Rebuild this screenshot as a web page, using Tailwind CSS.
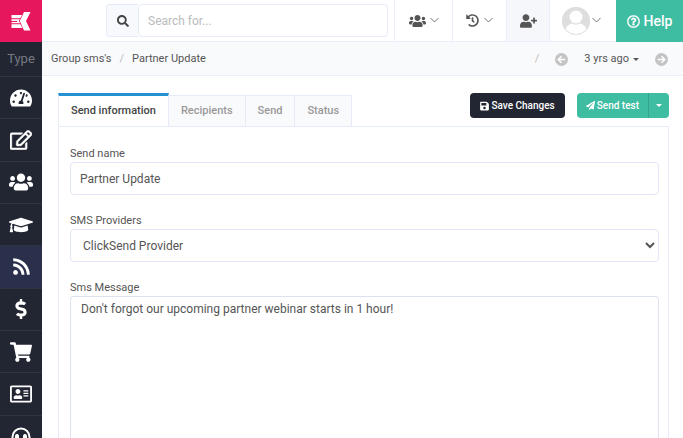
<!DOCTYPE html>
<html lang="en">
  <head>
    <meta charset="UTF-8" />
    <meta name="viewport" content="width=device-width, initial-scale=1.0" />
    <title>Partner Update</title>
    <script src="https://cdn.jsdelivr.net/npm/@tailwindcss/browser@4"></script>
  </head>
  <body class="h-screen overflow-hidden bg-white font-['Roboto',sans-serif] text-xs text-[#555]">
    <div class="flex h-full">
      <!-- Sidebar -->
      <aside class="w-[42px] shrink-0 overflow-hidden bg-[#222633] text-white">
        <a href="#" aria-label="Home" class="flex h-[42px] items-center justify-center bg-[#e6175c]">
          <svg class="h-5 w-5" viewBox="0 0 20 20" fill="currentColor">
            <path d="M.5 4H11L9.300 7.300H.5zM.5 8.200h8.300l-1 1.800 1.400 2.200H.5v-1.300h6L5.800 10H.5zM.5 13.200h9l1.800 3.800H.5zM13 1h6.500l-4.500 9 4.500 9.500H13L8.800 10z" />
          </svg>
        </a>
        <div class="flex h-[34px] items-center justify-center text-[13px] text-[#777a83]">Type</div>
        <nav class="grid h-[381px] auto-rows-fr">
          <a href="#" aria-label="Dashboard" class="flex items-center justify-center border-t border-[#303441]">
            <svg class="h-5 w-[22px]" viewBox="0 0 576 512" fill="currentColor"><path d="M288 32C128.940 32 0 160.940 0 320c0 52.800 14.250 102.260 39.060 144.800 5.610 9.620 16.300 15.200 27.440 15.200h443c11.140 0 21.830-5.580 27.440-15.200C561.750 422.260 576 372.800 576 320c0-159.060-128.940-288-288-288zm0 64c14.710 0 26.580 10.130 30.320 23.650-1.110 2.260-2.640 4.230-3.450 6.670l-9.220 27.670c-5.130 3.490-10.970 6.010-17.640 6.010-17.670 0-32-14.330-32-32S270.330 96 288 96zM96 384c-17.670 0-32-14.330-32-32s14.330-32 32-32 32 14.330 32 32-14.330 32-32 32zm48-160c-17.670 0-32-14.330-32-32s14.330-32 32-32 32 14.330 32 32-14.330 32-32 32zm246.770-72.410l-61.330 184C343.130 347.330 352 364.540 352 384c0 11.720-3.380 22.550-8.880 32H232.880c-5.500-9.450-8.880-20.280-8.880-32 0-33.940 26.500-61.430 59.900-63.590l61.340-184.010c4.170-12.560 17.730-19.450 30.360-15.170 12.570 4.190 19.350 17.790 15.170 30.360zm14.660 57.200l15.520-46.550c3.470-1.290 7.130-2.230 11.050-2.230 17.670 0 32 14.330 32 32s-14.330 32-32 32c-11.380-.01-20.890-6.280-26.570-15.220zM480 384c-17.670 0-32-14.330-32-32s14.330-32 32-32 32 14.330 32 32-14.330 32-32 32z" /></svg>
          </a>
          <a href="#" aria-label="Edit" class="flex items-center justify-center border-t border-[#303441]">
            <svg class="h-5 w-[22px]" viewBox="0 0 576 512" fill="currentColor" stroke="currentColor" stroke-width="10"><path d="M402.300 344.900l32-32c5-5 13.700-1.500 13.700 5.700V464c0 26.500-21.500 48-48 48H48c-26.500 0-48-21.500-48-48V112c0-26.500 21.500-48 48-48h273.500c7.100 0 10.700 8.600 5.700 13.700l-32 32c-1.500 1.500-3.500 2.300-5.700 2.300H48v352h352V350.500c0-2.100.8-4.100 2.300-5.600zm156.600-201.800L296.300 405.700l-90.400 10c-26.200 2.900-48.500-19.200-45.600-45.600l10-90.400L432.900 17.100c22.900-22.900 59.900-22.900 82.700 0l43.200 43.200c22.900 22.900 22.900 60 .1 82.800zM460.100 174L402 115.900 216.200 301.800l-7.300 65.300 65.300-7.300L460.100 174zm64.800-79.700l-43.200-43.200c-4.100-4.100-10.800-4.100-14.800 0L436 82l58.100 58.100 30.900-30.900c4-4.200 4-10.800-.1-14.900z" /></svg>
          </a>
          <a href="#" aria-label="Users" class="flex items-center justify-center border-t border-[#303441]">
            <svg class="h-5 w-6" viewBox="0 0 640 512" fill="currentColor"><path id="users" d="M96 224c35.300 0 64-28.700 64-64s-28.700-64-64-64-64 28.700-64 64 28.700 64 64 64zm448 0c35.300 0 64-28.700 64-64s-28.700-64-64-64-64 28.700-64 64 28.700 64 64 64zm32 32h-64c-17.600 0-33.500 7.100-45.100 18.600 40.300 22.100 68.900 62 75.100 109.400h66c17.700 0 32-14.300 32-32v-32c0-35.300-28.700-64-64-64zm-256 0c61.900 0 112-50.100 112-112S381.900 32 320 32 208 82.100 208 144s50.100 112 112 112zm76.800 32h-8.300c-20.800 10-43.900 16-68.500 16s-47.600-6-68.500-16h-8.300C179.600 288 128 339.600 128 403.200V432c0 26.500 21.500 48 48 48h288c26.500 0 48-21.500 48-48v-28.800c0-63.600-51.600-115.200-115.200-115.200zm-223.700-13.400C161.500 263.100 145.600 256 128 256H64c-35.300 0-64 28.700-64 64v32c0 17.700 14.300 32 32 32h65.900c6.300-47.400 34.900-87.300 75.200-109.400z" /></svg>
          </a>
          <a href="#" aria-label="Courses" class="flex items-center justify-center border-t border-[#303441]">
            <svg class="h-5 w-6" viewBox="0 0 640 512" fill="currentColor"><path d="M622.340 153.200L343.400 67.500c-15.200-4.670-31.600-4.670-46.790 0L17.660 153.200c-23.540 7.230-23.540 38.360 0 45.590l48.630 14.940c-10.670 13.190-17.230 29.280-17.880 46.900C38.780 266.150 32 276.110 32 288c0 10.780 5.680 19.850 13.860 25.650L20.330 428.530C18.110 438.520 25.710 448 35.940 448h56.110c10.240 0 17.840-9.480 15.620-19.470L82.140 313.650C90.320 307.850 96 298.780 96 288c0-11.570-6.470-21.250-15.660-26.870.76-15.020 8.440-28.300 20.690-36.720L296.600 284.500c9.060 2.780 26.440 6.250 46.790 0l278.950-85.700c23.550-7.240 23.550-38.360 0-45.600zM352.790 315.090c-28.530 8.760-52.840 3.920-65.590 0l-145.020-44.550L128 384c0 35.350 85.960 64 192 64s192-28.650 192-64l-14.180-113.470-145.030 44.560z" /></svg>
          </a>
          <a href="#" aria-label="Broadcasts" class="flex items-center justify-center border-t border-[#303441] bg-[#2a2f4b]">
            <svg class="h-[19px] w-[17px]" viewBox="0 0 448 512" fill="currentColor"><path d="M128.081 415.959c0 35.369-28.672 64.041-64.041 64.041S0 451.328 0 415.959s28.672-64.041 64.041-64.041 64.040 28.673 64.040 64.041zm175.660 47.250c-8.354-154.600-132.185-278.587-286.950-286.950C7.656 175.765 0 183.105 0 192.253v48.069c0 8.415 6.490 15.472 14.887 16.018 111.832 7.284 201.473 96.702 208.772 208.772.547 8.397 7.604 14.887 16.018 14.887h48.069c9.149.001 16.489-7.655 15.995-16.790zm144.249.288C439.596 229.677 251.465 40.445 16.503 32.010 7.473 31.686 0 38.981 0 48.016v48.068c0 8.625 6.835 15.645 15.453 15.999 191.179 7.839 344.627 161.316 352.465 352.465.353 8.618 7.373 15.453 15.999 15.453h48.068c9.034-.001 16.329-7.474 16.005-16.504z" /></svg>
          </a>
          <a href="#" aria-label="Billing" class="flex items-center justify-center border-t border-[#303441]">
            <svg class="h-5 w-3" viewBox="0 0 288 512" fill="currentColor"><path d="M209.200 233.400l-108-31.600C88.700 198.200 80 186.500 80 173.500c0-16.300 13.200-29.500 29.500-29.500h66.300c12.200 0 24.200 3.700 34.200 10.500 6.100 4.100 14.300 3.100 19.500-2l34.800-34c7.100-6.900 6.100-18.400-1.800-24.500C238 74.800 207.400 64.100 176 64V16c0-8.800-7.200-16-16-16h-32c-8.800 0-16 7.200-16 16v48h-2.500C45.800 64-5.400 118.700.5 183.600c4.200 46.100 39.400 83.600 83.800 96.600l102.500 30c12.500 3.700 21.200 15.300 21.200 28.300 0 16.300-13.200 29.500-29.500 29.500h-66.300C100 368 88 364.300 78 357.500c-6.100-4.100-14.300-3.100-19.500 2l-34.800 34c-7.100 6.900-6.100 18.400 1.800 24.500 24.500 19.200 55.100 29.900 86.500 30v48c0 8.800 7.200 16 16 16h32c8.800 0 16-7.200 16-16v-48.200c46.600-.9 90.300-28.600 105.700-72.700 21.500-61.600-14.600-124.800-72.500-141.700z" /></svg>
          </a>
          <a href="#" aria-label="Cart" class="flex items-center justify-center border-t border-[#303441]">
            <svg class="h-5 w-[22px]" viewBox="0 0 576 512" fill="currentColor"><path d="M528.120 301.319l47.273-208C578.806 78.301 567.391 64 551.990 64H159.208l-9.166-44.810C147.758 8.021 137.930 0 126.529 0H24C10.745 0 0 10.745 0 24v16c0 13.255 10.745 24 24 24h69.883l70.248 343.435C147.325 417.100 136 435.222 136 456c0 30.928 25.072 56 56 56s56-25.072 56-56c0-15.674-6.447-29.835-16.824-40h209.647C430.447 426.165 424 440.326 424 456c0 30.928 25.072 56 56 56s56-25.072 56-56c0-22.172-12.888-41.332-31.579-50.405l5.517-24.276c3.413-15.018-8.002-29.319-23.403-29.319H218.117l-6.545-32h293.145c11.206 0 20.920-7.754 23.403-18.681z" /></svg>
          </a>
          <a href="#" aria-label="Contacts" class="flex items-center justify-center border-t border-[#303441]">
            <svg class="h-5 w-[22px]" viewBox="0 0 576 512" fill="currentColor"><path d="M528 32H48C21.500 32 0 53.500 0 80v352c0 26.500 21.500 48 48 48h480c26.500 0 48-21.500 48-48V80c0-26.500-21.500-48-48-48zm0 400H48V80h480v352zM208 256c35.300 0 64-28.700 64-64s-28.700-64-64-64-64 28.700-64 64 28.700 64 64 64zm-89.600 128h179.200c12.400 0 22.400-8.600 22.400-19.200v-19.200c0-31.800-30.100-57.600-67.200-57.600-10.800 0-18.700 8-44.800 8-26.900 0-33.400-8-44.800-8-37.100 0-67.200 25.800-67.200 57.600v19.200c0 10.600 10 19.200 22.400 19.200zM352 288h128v32H352zM352 224h128v32H352zM352 160h128v32H352z" /></svg>
          </a>
          <a href="#" aria-label="Support" class="flex items-center justify-center border-t border-[#303441]">
            <svg class="h-[18px] w-5" viewBox="0 0 20 18" fill="none" stroke="currentColor" stroke-width="2">
              <path d="M1.500 13v-3a8.500 8.500 0 0 1 17 0v4a3 3 0 0 1-3 3H10" />
              <path d="M5.500 7H6.500a2 2 0 0 1 1.500 2v3a2 2 0 0 1-2 2 2 2 0 0 1-2-2V9a2 2 0 0 1 1.500-2zM14.500 7H13.500a2 2 0 0 0-1.500 2v3a2 2 0 0 0 2 2 2 2 0 0 0 2-2V9a2 2 0 0 0-1.500-2z" fill="currentColor" stroke="none" />
            </svg>
          </a>
        </nav>
      </aside>

      <div class="flex min-w-0 flex-1 flex-col">
        <!-- Top bar -->
        <header class="flex h-[42px] shrink-0 border-b border-[#ebeffb]">
          <form class="flex flex-1 items-center pr-[6px] pl-16">
            <button type="button" aria-label="Search" class="flex h-[33px] w-8 shrink-0 items-center justify-center rounded-l border border-r-0 border-[#e6ebfa] bg-[#f8f9fc] text-[#444]">
              <svg class="h-3 w-3" viewBox="0 0 512 512" fill="currentColor"><path d="M505 442.700L405.300 343c-4.500-4.500-10.600-7-17-7H372c27.600-35.300 44-79.700 44-128C416 93.100 322.900 0 208 0S0 93.100 0 208s93.100 208 208 208c48.300 0 92.700-16.400 128-44v16.300c0 6.400 2.500 12.500 7 17l99.700 99.700c9.400 9.400 24.600 9.400 33.900 0l28.300-28.300c9.400-9.400 9.400-24.600.1-34zM208 336c-70.700 0-128-57.200-128-128 0-70.700 57.200-128 128-128 70.700 0 128 57.200 128 128 0 70.700-57.200 128-128 128z" /></svg>
            </button>
            <input type="text" aria-label="Search for" placeholder="Search for..." class="h-[33px] w-full min-w-0 rounded border border-[#e6ebfa] px-[9px] text-xs placeholder:text-[#bbb]" />
          </form>
          <button type="button" aria-label="Groups" class="flex w-[58px] items-center justify-center gap-1 border-l border-[#ebeffb]">
            <svg class="h-[14px] w-[17px]" viewBox="0 0 640 512" fill="currentColor"><use href="#users" /></svg>
            <svg class="h-[9px] w-[9px] text-[#777]" viewBox="0 0 9 9" fill="none" stroke="currentColor"><path d="M.5 2l4 4 4-4" /></svg>
          </button>
          <button type="button" aria-label="History" class="flex w-[54px] items-center justify-center gap-[5px] border-l border-[#ebeffb]">
            <svg class="h-[13px] w-[13px]" viewBox="0 0 512 512" fill="currentColor"><path d="M504 255.531c.253 136.640-111.180 248.372-247.820 248.468-59.015.042-113.223-20.530-155.822-54.911-11.077-8.940-11.905-25.541-1.839-35.607l11.267-11.267c8.609-8.609 22.353-9.551 31.891-1.984C173.062 425.135 212.781 440 256 440c101.705 0 184-82.311 184-184 0-101.705-82.311-184-184-184-48.814 0-93.149 18.969-126.068 49.932l50.754 50.754c10.080 10.080 2.941 27.314-11.313 27.314H24c-8.837 0-16-7.163-16-16V38.627c0-14.254 17.234-21.393 27.314-11.314l49.372 49.372C129.209 34.136 189.552 8 256 8c136.810 0 247.747 110.780 248 247.531zm-180.912 78.784l9.823-12.630c8.138-10.463 6.253-25.542-4.210-33.679L288 256.349V152c0-13.255-10.745-24-24-24h-16c-13.255 0-24 10.745-24 24v135.651l65.409 50.874c10.463 8.137 25.541 6.253 33.679-4.210z" /></svg>
            <svg class="h-[9px] w-[9px] text-[#777]" viewBox="0 0 9 9" fill="none" stroke="currentColor"><path d="M.5 2l4 4 4-4" /></svg>
          </button>
          <button type="button" aria-label="Add user" class="flex w-[43px] items-center justify-center border-l border-[#ebeffb] bg-[#f5f7fb]">
            <svg class="h-[14px] w-[17px]" viewBox="0 0 640 512" fill="currentColor"><path d="M624 208h-64v-64c0-8.800-7.200-16-16-16h-32c-8.800 0-16 7.200-16 16v64h-64c-8.800 0-16 7.200-16 16v32c0 8.800 7.200 16 16 16h64v64c0 8.800 7.200 16 16 16h32c8.800 0 16-7.200 16-16v-64h64c8.800 0 16-7.200 16-16v-32c0-8.800-7.200-16-16-16zm-400 48c70.700 0 128-57.300 128-128S294.700 0 224 0 96 57.300 96 128s57.300 128 128 128zm89.600 32h-16.700c-22.200 10.200-46.900 16-72.900 16s-50.600-5.800-72.900-16h-16.700C60.200 288 0 348.200 0 422.400V464c0 26.500 21.500 48 48 48h352c26.500 0 48-21.500 48-48v-41.600c0-74.200-60.200-134.400-134.400-134.400z" /></svg>
          </button>
          <button type="button" aria-label="Account" class="flex w-[67px] items-center justify-center gap-[2px] border-l border-[#ebeffb] pr-1">
            <svg class="h-7 w-7" viewBox="0 0 28 28">
              <clipPath id="avatar"><circle cx="14" cy="14" r="14" /></clipPath>
              <g clip-path="url(#avatar)">
                <path d="M0 0h28v28H0z" fill="#dedede" />
                <circle cx="14" cy="10" r="6.500" fill="#fff" />
                <path d="M2 28c0-8 5-11 8-11.500 2.500 1.500 5.500 1.500 8 0 3 .5 8 3.500 8 11.500z" fill="#fff" />
              </g>
              <circle cx="14" cy="14" r="13.500" fill="none" stroke="#dedede" />
            </svg>
            <svg class="h-[9px] w-[9px] text-[#777]" viewBox="0 0 9 9" fill="none" stroke="currentColor"><path d="M.5 2l4 4 4-4" /></svg>
          </button>
          <a href="#" class="-mb-px flex w-[67px] items-center justify-center gap-1 bg-[#3fbda2] text-sm font-medium text-white">
            <svg class="h-[13px] w-[13px]" viewBox="0 0 512 512" fill="currentColor" stroke="currentColor" stroke-width="12"><path d="M256 8C119.043 8 8 119.083 8 256c0 136.997 111.043 248 248 248s248-111.003 248-248C504 119.083 392.957 8 256 8zm0 448c-110.532 0-200-89.431-200-200 0-110.495 89.472-200 200-200 110.491 0 200 89.471 200 200 0 110.530-89.431 200-200 200zm107.244-255.200c0 67.052-72.421 68.084-72.421 92.863V300c0 6.627-5.373 12-12 12h-45.647c-6.627 0-12-5.373-12-12v-8.659c0-35.745 27.100-50.034 47.579-61.516 17.561-9.845 28.324-16.541 28.324-29.579 0-17.246-21.999-28.693-39.784-28.693-23.189 0-33.894 10.977-48.942 29.969-4.057 5.120-11.460 6.071-16.666 2.124l-27.824-21.098c-5.107-3.872-6.251-11.066-2.644-16.363C184.846 131.491 214.940 112 261.794 112c49.071 0 101.450 38.304 101.450 88.800zM298 368c0 23.159-18.841 42-42 42s-42-18.841-42-42 18.841-42 42-42 42 18.841 42 42z" /></svg>
            Help
          </a>
        </header>

        <!-- Breadcrumb -->
        <div class="flex h-[34px] shrink-0 items-center border-b border-[#ebeffb] bg-[#f9fafc] pt-[2px] pr-[15px] pl-[9px] text-[11px]">
          <a href="#">Group sms's</a>
          <span class="mx-2 text-[#bbb]">/</span>
          <a href="#">Partner Update</a>
          <div class="ml-auto flex items-center">
            <span class="text-[#bbb]">/</span>
            <button type="button" aria-label="Previous" class="ml-4 text-[#c4c4c4]">
              <svg class="h-[13px] w-[13px]" viewBox="0 0 14 14"><circle cx="7" cy="7" r="7" fill="currentColor" /><path d="M11 7H3.800M7 3.500L3.500 7 7 10.500" fill="none" stroke="#fff" stroke-width="1.600" /></svg>
            </button>
            <button type="button" class="mx-4 flex items-center gap-1">
              3 yrs ago
              <svg class="h-[3px] w-[6px]" viewBox="0 0 6 3" fill="currentColor"><path d="M0 0h6L3 3z" /></svg>
            </button>
            <button type="button" aria-label="Next" class="text-[#c4c4c4]">
              <svg class="h-[13px] w-[13px]" viewBox="0 0 14 14"><circle cx="7" cy="7" r="7" fill="currentColor" /><path d="M3 7h7.200M7 3.500L10.500 7 7 10.500" fill="none" stroke="#fff" stroke-width="1.600" /></svg>
            </button>
          </div>
        </div>

        <main class="flex min-h-0 flex-1 flex-col pt-[17px] pr-[14px] pl-4">
          <!-- Tabs and actions -->
          <div class="flex items-start justify-between">
            <div role="tablist" class="-mb-px flex items-end text-[11px] font-medium text-[#999]">
              <button role="tab" aria-selected="true" class="h-[34px] border-x border-t-3 border-x-[#e6ebfa] border-t-[#2492d1] bg-white px-3 text-[#444]">Send information</button>
              <button role="tab" class="mb-px h-[31px] border-t border-r border-[#e6ebfa] bg-[#f9fafc] px-3">Recipients</button>
              <button role="tab" class="mb-px h-[31px] border-t border-r border-[#e6ebfa] bg-[#f9fafc] px-3">Send</button>
              <button role="tab" class="mb-px h-[31px] border-t border-r border-[#e6ebfa] bg-[#f9fafc] px-3">Status</button>
            </div>
            <div class="flex gap-3 text-[10px] font-medium text-white">
              <button type="button" class="flex h-[25px] items-center gap-[2px] rounded bg-[#222633] px-[10px]">
                <svg class="h-[10px] w-[9px]" viewBox="0 0 448 512" fill="currentColor"><path d="M433.941 129.941l-83.882-83.882A48 48 0 0 0 316.118 32H48C21.490 32 0 53.490 0 80v352c0 26.510 21.490 48 48 48h352c26.510 0 48-21.490 48-48V163.882a48 48 0 0 0-14.059-33.941zM224 416c-35.346 0-64-28.654-64-64 0-35.346 28.654-64 64-64s64 28.654 64 64c0 35.346-28.654 64-64 64zm96-304.520V212c0 6.627-5.373 12-12 12H76c-6.627 0-12-5.373-12-12V108c0-6.627 5.373-12 12-12h228.520c3.183 0 6.235 1.264 8.485 3.515l3.480 3.480A11.996 11.996 0 0 1 320 111.480z" /></svg>
                Save Changes
              </button>
              <div class="flex h-[25px] overflow-hidden rounded bg-[#3fbda2]">
                <button type="button" class="flex items-center gap-[2px] px-[9px]">
                  <svg class="h-[9px] w-[9px]" viewBox="0 0 512 512" fill="currentColor"><path d="M476 3.200L12.500 270.600c-18.100 10.400-15.800 35.600 2.200 43.200L121 358.400l287.300-253.200c5.500-4.900 13.300 2.600 8.600 8.300L176 407v80.500c0 23.600 28.500 32.900 42.500 15.800L282 426l124.600 52.200c14.200 6 30.400-2.900 33-18.200l72-432C515 7.800 493.300-6.800 476 3.200z" /></svg>
                  Send test
                </button>
                <button type="button" aria-label="More send options" class="flex w-[21px] items-center justify-center border-l border-[#35a48c]">
                  <svg class="h-[3px] w-[6px]" viewBox="0 0 6 3" fill="currentColor"><path d="M0 0h6L3 3z" /></svg>
                </button>
              </div>
            </div>
          </div>

          <!-- Send form -->
          <form class="flex min-h-0 flex-1 flex-col border border-b-0 border-[#e6ebfa] pt-[19px] pr-[9px] pl-[11px]">
            <label for="sendName" class="text-[11px] leading-4">Send name</label>
            <input id="sendName" type="text" value="Partner Update" class="h-[33px] shrink-0 rounded border border-[#e2e7f8] px-[9px] text-xs" />
            <label for="provider" class="mt-[18px] text-[11px] leading-4">SMS Providers</label>
            <select id="provider" class="h-[33px] shrink-0 rounded border border-[#e2e7f8] bg-white px-2 text-xs">
              <option>ClickSend Provider</option>
            </select>
            <label for="message" class="mt-[18px] text-[11px] leading-4">Sms Message</label>
            <textarea id="message" class="min-h-0 flex-1 resize-none rounded-t border border-b-0 border-[#dde2f0] px-[10px] py-[3px] text-xs leading-[18px]">Don't forgot our upcoming partner webinar starts in 1 hour!</textarea>
          </form>
        </main>
      </div>
    </div>
  </body>
</html>
